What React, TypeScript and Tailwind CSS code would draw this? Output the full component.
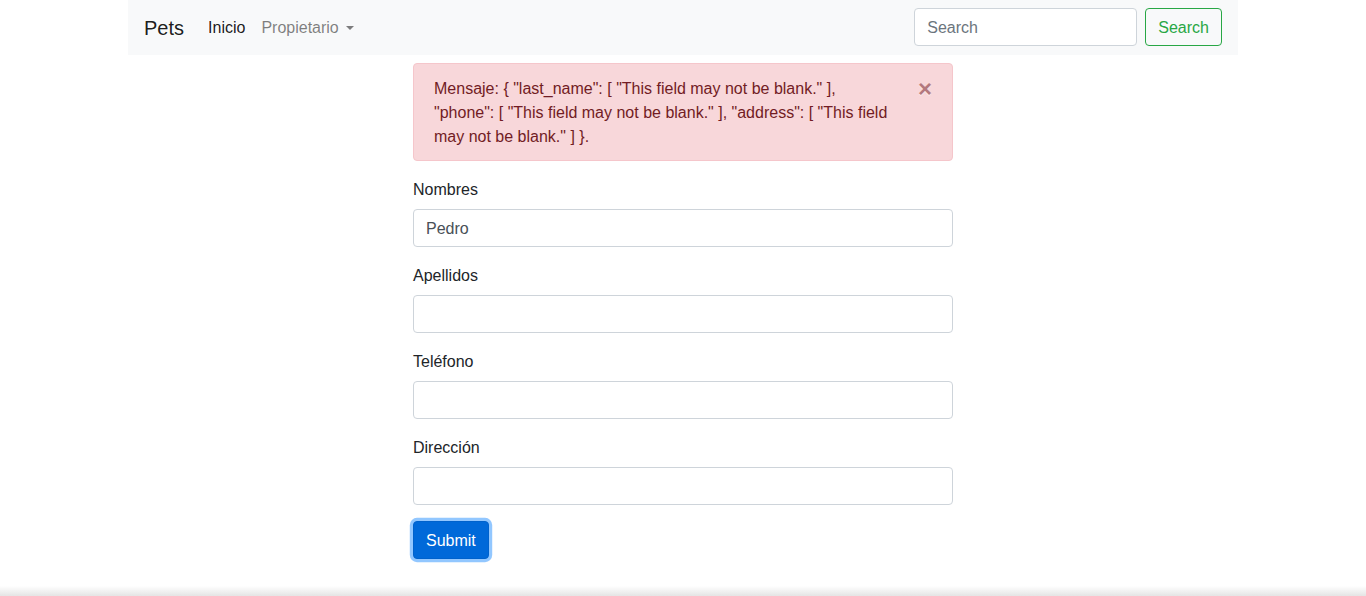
export default function App() {
  const fields = [
    { label: 'Nombres', value: 'Pedro' },
    { label: 'Apellidos', value: '' },
    { label: 'Teléfono', value: '' },
    { label: 'Dirección', value: '' },
  ];

  return (
    <div className="min-h-screen bg-white text-[#212529] text-base leading-6 font-['Liberation_Sans',Arial,sans-serif]">
      <div className="w-[1110px] mx-auto">
        <nav className="bg-[#f8f9fa] px-4 pt-2 pb-[9px] flex items-center">
          <a className="text-[20px] leading-[30px] pt-px text-black/90 mr-4">Pets</a>
          <ul className="flex items-center">
            <li>
              <a className="block px-2 pt-2 pb-1.5 text-black/90">Inicio</a>
            </li>
            <li>
              <a className="flex items-center px-2 pt-2 pb-1.5 text-black/50">
                Propietario
                <span className="ml-[7px] w-0 h-0 border-x-[4.8px] border-x-transparent border-t-[4.8px] border-t-black/50"></span>
              </a>
            </li>
          </ul>
          <form className="ml-auto flex items-center">
            <input
              type="search"
              placeholder="Search"
              className="w-[223px] h-[38px] px-3 pt-[7px] pb-[5px] bg-white border border-[#ced4da] rounded text-[#495057] placeholder:text-[#6c757d] outline-none mr-2"
            />
            <button
              type="button"
              className="h-[38px] px-3 pt-px border border-[#28a745] text-[#28a745] rounded bg-transparent"
            >
              Search
            </button>
          </form>
        </nav>
      </div>

      <div className="w-[540px] mx-auto mt-2">
        <div className="relative mb-4 pl-5 pr-16 pt-[13px] pb-[11px] bg-[#f8d7da] border border-[#f5c6cb] text-[#721c24] rounded">
          Mensaje: {'{'} "last_name": [ "This field may not be blank." ], "phone": [ "This field may not be blank." ], "address": [ "This field may not be blank." ] {'}'}.
          <button
            type="button"
            className="absolute top-0 right-0 px-5 pt-[13px] pb-[11px] text-[24px] leading-none font-bold text-[#721c24] opacity-50 [text-shadow:0_1px_0_#fff]"
          >
            ×
          </button>
        </div>

        <form>
          {fields.map((f) => (
            <div key={f.label} className="mb-4">
              <label className="block pt-px mb-[7px]">{f.label}</label>
              <input
                type="text"
                defaultValue={f.value}
                className="block w-full h-[38px] px-3 pt-[7px] pb-[5px] bg-white border border-[#ced4da] rounded text-[#495057] outline-none"
              />
            </div>
          ))}
          <button
            type="submit"
            className="h-[38px] px-3 pt-px bg-[#0069d9] border border-[#0062cc] text-white rounded shadow-[0_0_0_3.2px_rgba(38,143,255,0.5)]"
          >
            Submit
          </button>
        </form>
      </div>

      <div className="fixed inset-x-0 bottom-0 h-[10px] bg-gradient-to-b from-white/0 to-[#e4e4e4] pointer-events-none"></div>
    </div>
  );
}
